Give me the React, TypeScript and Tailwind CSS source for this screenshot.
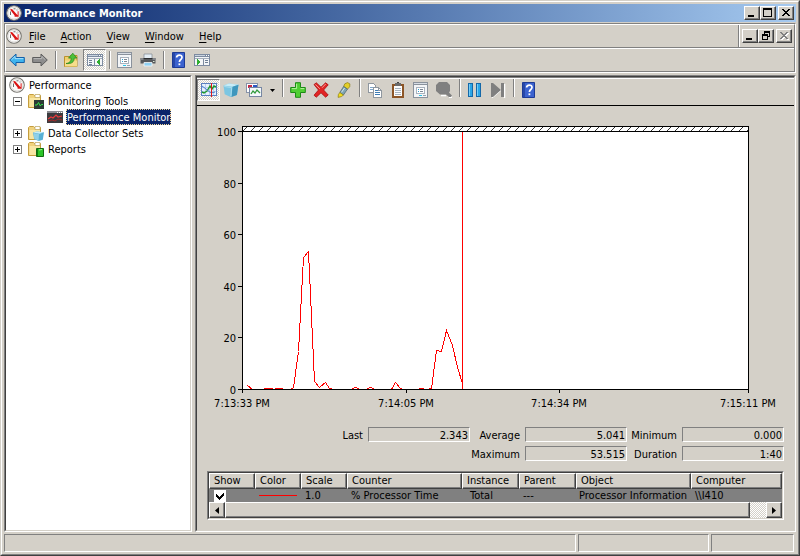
import type { ReactNode } from 'react';
import clsx from 'clsx';

const RAISED =
  'bg-[#d4d0c8] border border-t-white border-l-white border-r-[#404040] border-b-[#404040] shadow-[inset_-1px_-1px_0_#808080]';
const SUNKEN = 'border border-t-[#808080] border-l-[#808080] border-r-white border-b-white';
const CHECKER = 'bg-[repeating-conic-gradient(#ffffff_0_25%,#d4d0c8_0_50%)] bg-[length:2px_2px]';

/* ── Icons ─────────────────────────────────────────── */

function Svg({ children, crisp }: { children: ReactNode; crisp?: boolean }) {
  return (
    <svg
      width="16"
      height="16"
      viewBox="0 0 16 16"
      fill="none"
      aria-hidden="true"
      className="shrink-0"
      shapeRendering={crisp ? 'crispEdges' : 'auto'}
    >
      {children}
    </svg>
  );
}

const GaugeIcon = () => (
  <Svg>
    <circle cx="8" cy="8" r="7.3" fill="#fbfbfb" stroke="#77756f" strokeWidth="1.1" />
    <circle cx="8" cy="8" r="6" stroke="#dedcd8" />
    <path d="M4.500 10V6.500M7.500 3.800h2M10.500 5h1" stroke="#6b6b6b" strokeWidth="1" />
    <path d="M4 4.600L6 4l5.600 6.200V6.200h1v5.600H8.600V10.600z" fill="#dc1414" />
  </Svg>
);

const BackIcon = () => (
  <Svg>
    <path d="M.7 8L7 2v3.5h8.3v5H7V14z" fill="#3fb4ee" stroke="#1560a8" />
    <path d="M2.5 7.8L6 4.4v2.2h8.3" stroke="#a5e0fb" />
  </Svg>
);

const ForwardIcon = () => (
  <Svg>
    <path d="M15.3 8L9 2v3.5H.7v5H9V14z" fill="#8d8d8d" stroke="#5c5c5c" />
    <path d="M1.6 6.6h8.2V4.4l3.4 3.3" stroke="#b9b9b9" />
  </Svg>
);

const UpFolderIcon = () => (
  <Svg>
    <path d="M1.5 4.5h5l1-1h6.5v11H1.5z" fill="#f0cf6e" stroke="#b8912d" />
    <path d="M2 8.5h12v6H2z" fill="#f6dd8b" />
    <path d="M3 11.500c3.800-.4 5.200-2.600 5.200-5.400H5.500L9.800 1.200l4 4.900h-2.600c0 4.200-2.900 6-8.200 5.400z" fill="#4cc13a" stroke="#21821a" strokeWidth=".7" />
  </Svg>
);

const PaneIcon = ({ flip }: { flip?: boolean }) => (
  <Svg crisp>
    <path d="M0 2h16v12H0z" fill="#7d8ba0" />
    <path d="M1 5h14v8H1z" fill="#f4f6f8" />
    <path d="M1 3h10v1H1z" fill="#c9d3df" />
    <path d="M12 3h1v1h-1zM14 3h1v1h-1z" fill="#fff" />
    <path d="M1 6h14v1H1z" fill="#a3adbb" />
    {flip ? (
      <>
        <path d="M9 7h1v6H9z" fill="#7d8ba0" />
        <path d="M11 8h3v1h-3zM11 10h3v1h-3z" fill="#6e7f95" />
        <path d="M3 7h1v6H3zM4 8h1v4H4zM5 9h1v2H5z" fill="#2fae2f" />
      </>
    ) : (
      <>
        <path d="M7 7h1v6H7z" fill="#7d8ba0" />
        <path d="M2 8h3v1H2zM2 10h3v1H2zM2 12h3v1H2z" fill="#6e7f95" />
        <path d="M12 7h1v6h-1zM11 8h1v4h-1zM10 9h1v2h-1z" fill="#2fae2f" />
      </>
    )}
  </Svg>
);

const PropertiesIcon = () => (
  <Svg crisp>
    <path d="M0 0h15v16H0z" fill="#8a929c" />
    <path d="M1 3h13v12H1z" fill="#f3f5f7" />
    <path d="M1 1h13v1H1z" fill="#d7dde4" />
    <path d="M3 5h9v7H3z" fill="#a9b2bd" />
    <path d="M4 6h7v5H4z" fill="#fff" />
    <path d="M5 7h1v1H5zM5 9h1v1H5z" fill="#2a9fd0" />
    <path d="M7 7h3v1H7zM7 9h3v1H7z" fill="#7c8794" />
    <path d="M6 13h3v1H6z" fill="#28c3e8" />
    <path d="M10 13h3v1h-3z" fill="#98a3af" />
  </Svg>
);

const PrintIcon = () => (
  <Svg>
    <path d="M4 2h8v5H4z" fill="#e3edf5" stroke="#8b939b" strokeWidth=".8" />
    <path d="M.5 6h15v5.500H.5z" fill="#55585c" />
    <path d="M.5 6h15v2H.5z" fill="#83878c" />
    <path d="M3.500 6h9v1.500h-9z" fill="#2c2e31" />
    <path d="M4 10.500h8V14H4z" fill="#8fd0f2" stroke="#f2f6f9" strokeWidth=".8" />
    <path d="M13 9h1.500v1H13z" fill="#d9e7d0" />
  </Svg>
);

const HelpIcon = () => (
  <Svg>
    <path d="M1.500.5h12v15h-12z" fill="#3b62cf" stroke="#1d3a96" />
    <path d="M2 1h2v14H2z" fill="#2747a8" />
    <path d="M5.600 5.600C5.600 2.300 11.200 2.200 11 5.500c-.1 2-2.600 2.100-2.600 4.500" stroke="#fff" strokeWidth="1.700" />
    <path d="M7.500 11.400h1.800v1.800H7.500z" fill="#fff" />
  </Svg>
);

const LineGraphIcon = () => (
  <Svg crisp>
    <path d="M.5 1.500h15v12H.5z" fill="#e8f1fc" stroke="#5a7fc0" />
    <path d="M1 5.500h14M1 9.500h14M4.500 2v11M8.500 2v11M12.500 2v11" stroke="#b6cfee" />
    <path d="M1 10l2 1 3-2 3-5 2 3 2-3 2 1" stroke="#1f9a2a" strokeWidth="1.400" shapeRendering="auto" />
    <path d="M1 4l4 3 5 4 4-1" stroke="#4b7ed0" shapeRendering="auto" />
    <path d="M10 1h1v14h-1z" fill="#e01b1b" />
  </Svg>
);

const CubeIcon = () => (
  <Svg>
    <path d="M.5 3.500L6 1.500l9.500 1.200-1.600 10.400-6.400 1.900-5.800-2.700z" fill="#7cc6e2" />
    <path d="M.5 3.500L6 1.500l9.500 1.200-6 2.100z" fill="#c8ecf7" />
    <path d="M9.500 4.800l6-2.100-1.600 10.400-5.400 1.800z" fill="#3f97bd" />
    <path d="M1.300 4.500l7.400 1.100-.8 8.500" stroke="#a9deef" />
  </Svg>
);

const PicturesIcon = () => (
  <Svg crisp>
    <path d="M.5 1.500h11v9H.5z" fill="#fff" stroke="#8692a8" />
    <path d="M2 3h4v3H2z" fill="#c22743" />
    <path d="M7 3h4v3H7z" fill="#2c57c4" />
    <path d="M3.500 5.500h12v9h-12z" fill="#f4f7fb" stroke="#7787a3" />
    <path d="M5 12l2-3 2 2 2-3 3 3" stroke="#2f9a3a" strokeWidth="1.300" shapeRendering="auto" />
  </Svg>
);

const AddIcon = () => (
  <Svg>
    <path d="M5.500.7h5v4.800h4.800v5h-4.800v4.800h-5v-4.800H.7v-5h4.800z" fill="#4fce32" stroke="#1c8a14" />
    <path d="M6.600 6.600V1.800M1.800 6.600h4.800M10.500 6.600h3.800" stroke="#b4f29c" />
  </Svg>
);

const DeleteIcon = () => (
  <Svg>
    <path d="M1 2.600L3.300.8 8 5.200l4.600-4.400 2.600 2L10.600 8l4.600 5-2.600 2.200L8 10.800l-4.700 4.400L1 13.200 5.500 8z" fill="#e22424" stroke="#a80f0f" strokeWidth=".8" />
    <path d="M2.400 2.500l4.400 4.300M12.700 2L9 5.800" stroke="#f79a94" />
  </Svg>
);

const HighlightIcon = () => (
  <Svg>
    <path d="M8.800 1.800L11.500.6l2.400 1.300-.2 2.900-2.200 2.300-3.900-2.600z" fill="#e3cf28" stroke="#8a7b12" strokeWidth=".7" />
    <path d="M7.600 4.500l3.900 2.600-4.100 5.900-3.600-2.500z" fill="#7fa5b4" stroke="#47616c" strokeWidth=".7" />
    <path d="M3.800 10.500l3.600 2.500-2 1.600-3.300.8.300-2.900z" fill="#f1dc1e" stroke="#8a7b12" strokeWidth=".7" />
    <path d="M8.600 6L5.500 10.300" stroke="#d3e5ea" />
  </Svg>
);

const CopyIcon = () => (
  <Svg crisp>
    <path d="M1.500 1.500h5l2 2v7h-7z" fill="#fff" stroke="#8f979f" />
    <path d="M3 5h4M3 7h4" stroke="#7fa8cc" />
    <path d="M6.500 5.500h5l3 3v7h-8z" fill="#fff" stroke="#8f979f" />
    <path d="M8 8.500h3M8 10.500h5M8 12.500h5" stroke="#3f7db5" />
    <path d="M11 5h1v3h3v1h-4z" fill="#8f979f" />
  </Svg>
);

const PasteIcon = () => (
  <Svg crisp>
    <path d="M2 2h12v14H2z" fill="#8c5526" />
    <path d="M4 4h8v10H4z" fill="#fbfcfd" />
    <path d="M5 1h6v3H5z" fill="#6b6b6b" />
    <path d="M7 0h2v1H7z" fill="#444" />
    <path d="M5 6.500h6M5 8.500h6M5 10.500h6M5 12.500h6" stroke="#a7b3be" />
  </Svg>
);

const ZoomIcon = () => (
  <Svg>
    <path d="M12.500 11.500l3.500 4h-3M5 13.500h5" stroke="#fff" strokeWidth="1.300" />
    <path d="M3 0h8l3 3v6l-1 1.500 3 3-1 1.500h-2l-3-2.500H4L0 9V3z" fill="#808080" />
  </Svg>
);

const PauseIcon = () => (
  <Svg crisp>
    <path d="M1.500 1.500h4v13h-4zM9.500 1.500h4v13h-4z" fill="#2ba6e6" stroke="#1468a8" />
    <path d="M2 2h1v12H2zM10 2h1v12h-1z" fill="#75cdf6" />
  </Svg>
);

const StepIcon = () => (
  <Svg>
    <path d="M2 15.500l9-7.500M14.500 2v14" stroke="#fff" strokeWidth="1.500" />
    <path d="M1 1h2l8 7-8 7H1zM11 1h3v14h-3z" fill="#808080" />
  </Svg>
);

const Folder = () => (
  <>
    <path d="M.5 2.500l1-1h4l1 1h6v12H.5z" fill="#f0d27c" stroke="#c59d3d" />
    <path d="M7 1.500h5v3H7z" fill="#fff" stroke="#b9a25a" strokeWidth=".7" />
    <path d="M1.500 5h10.500v9H1.500z" fill="#f8e6a4" />
  </>
);

const ToolsFolderIcon = () => (
  <Svg>
    <Folder />
    <path d="M6 7h10v9H6z" fill="#2b3a34" />
    <path d="M7 12h2l1.500-2.500 1.800 3.500 1-1.500H15" stroke="#35e04a" />
  </Svg>
);

const DataFolderIcon = () => (
  <Svg>
    <Folder />
    <path d="M5 7.500l4-1 7 .8-1.200 7.500-4 1.200-4.600-1.800z" fill="#58b1d6" />
    <path d="M5 7.500l4-1 7 .8-4.500 1.500z" fill="#c5ebf7" />
    <path d="M5.500 8l5.500 1-.4 6.500-4.200-1.600z" fill="#8fd0e8" />
  </Svg>
);

const ReportsFolderIcon = () => (
  <Svg>
    <Folder />
    <path d="M8.500 7.500h7v8h-7z" fill="#2cc428" stroke="#0f6a10" />
    <path d="M9 8h1v7H9z" fill="#0f7d12" />
    <path d="M11 9l3-.5" stroke="#9bf08e" />
  </Svg>
);

const MonitorIcon = () => (
  <Svg crisp>
    <path d="M0 2h16v12H0z" fill="#3b3b3e" />
    <path d="M0 2h16v2H0z" fill="#8b8b90" />
    <path d="M10 3h1v1h-1zM12 3h1v1h-1zM14 3h1v1h-1z" fill="#fff" />
    <path d="M1 10l3-2 2 1 3-3 2 2 4-1" stroke="#ea3b3b" strokeWidth="1.200" shapeRendering="auto" />
    <path d="M1 12l4-1 3 1 3-2 4 1" stroke="#a32b2b" shapeRendering="auto" />
  </Svg>
);

/* ── Window caption buttons ────────────────────────── */

type Caption = 'minimize' | 'maximize' | 'restore' | 'close';

const CAPTION_PATHS: Record<Caption, string> = {
  minimize: 'M3 8h6v2H3z',
  maximize: 'M2 1h9v9H2zM3 3v6h7V3z',
  restore: 'M5 1h6v6H9V6h1V3H6v1H5zM3 4h6v6H3zM4 6v3h4V6z',
  close: 'M3 2h2v1h1v1h2V3h1V2h2v1h-1v1H9v1H8v1h1v1h1v1h1v1H9V8H8V7H6v1H5v1H3V8h1V7h1V6h1V5H5V4H4V3H3z',
};

function CaptionButton({ kind, label, disabled }: { kind: Caption; label: string; disabled?: boolean }) {
  return (
    <button
      aria-label={label}
      disabled={disabled}
      className={clsx('h-[14px] w-4', RAISED, kind === 'close' && 'ml-0.5')}
    >
      <svg
        width="14"
        height="12"
        viewBox="0 0 14 12"
        fillRule="evenodd"
        shapeRendering="crispEdges"
        className="block"
        aria-hidden="true"
      >
        {disabled && <path d={CAPTION_PATHS[kind]} fill="#fff" transform="translate(1 1)" />}
        <path d={CAPTION_PATHS[kind]} fill={disabled ? '#808080' : '#000'} />
      </svg>
    </button>
  );
}

/* ── Toolbars ──────────────────────────────────────── */

function ToolButton({ label, pressed, children }: { label: string; pressed?: boolean; children: ReactNode }) {
  return (
    <button
      aria-label={label}
      aria-pressed={pressed}
      className={clsx('flex h-[22px] w-[23px] shrink-0 items-center pl-[3px]', pressed && [SUNKEN, CHECKER])}
    >
      {children}
    </button>
  );
}

const Separator = () => (
  <div className="flex w-2 shrink-0 justify-center">
    <div className="h-[18px] w-0.5 border-l border-r border-l-[#808080] border-r-white" />
  </div>
);

const MENUS = ['File', 'Action', 'View', 'Window', 'Help'];

/* ── Console tree ──────────────────────────────────── */

function Expander({ open }: { open?: boolean }) {
  return (
    <button aria-label={open ? 'Collapse' : 'Expand'} className="mr-1.5 size-[9px]">
      <svg width="9" height="9" viewBox="0 0 9 9" shapeRendering="crispEdges" className="block" aria-hidden="true">
        <path d="M.5.5h8v8h-8z" fill="#fff" stroke="#808080" />
        <path d={open ? 'M2 4h5v1H2z' : 'M2 4h5v1H2zM4 2h1v5H4z'} fill="#000" />
      </svg>
    </button>
  );
}

function ConsoleTree() {
  return (
    <nav className={clsx('bg-white', SUNKEN)} aria-label="Console tree">
      <ul className="h-full border border-t-[#404040] border-l-[#404040] border-r-[#d4d0c8] border-b-[#d4d0c8]">
        <li className="flex h-4 items-center gap-1 pl-[3px]">
          <GaugeIcon />
          <span>Performance</span>
        </li>
        <li className="flex h-4 items-center pl-[7px]">
          <Expander open />
          <ToolsFolderIcon />
          <span className="ml-1">Monitoring Tools</span>
        </li>
        <li className="flex h-4 items-center gap-[3px] pl-[41px]">
          <MonitorIcon />
          <span className="h-4 border border-dotted border-[#f5db95] bg-[#0a246a] text-white">
            Performance Monitor
          </span>
        </li>
        <li className="flex h-4 items-center pl-[7px]">
          <Expander />
          <DataFolderIcon />
          <span className="ml-1">Data Collector Sets</span>
        </li>
        <li className="flex h-4 items-center pl-[7px]">
          <Expander />
          <ReportsFolderIcon />
          <span className="ml-1">Reports</span>
        </li>
      </ul>
    </nav>
  );
}

/* ── Graph ─────────────────────────────────────────── */

const PLOT = { left: 35, right: 541, top: 13, bottom: 271 };

const Y_TICKS = [100, 80, 60, 40, 20, 0];

const X_TICKS = [
  { at: 0, label: '7:13:33 PM' },
  { at: 164, label: '7:14:05 PM' },
  { at: 317, label: '7:14:34 PM' },
  { at: 506, label: '7:15:11 PM' },
];

// [offset along the time axis, % processor time]
const SAMPLES: [number, number][] = [
  [5, 1.6], [10, 0.1], [20, 0], [24, 0.5], [29, 0.5], [31, 0], [34, 0.5], [39, 0.5], [41, 0], [48, 0],
  [51, 0.8], [56, 14.7], [61, 51], [66, 53.5], [72, 3], [77, 0.8], [83, 2.8], [87, 0.5], [91, 0],
  [108, 0], [113, 0.8], [118, 0], [123, 0], [128, 0.8], [133, 0], [149, 0], [153, 2.8], [158, 0.4],
  [160, 0], [175, 0], [179, 0.5], [184, 0], [189, 0.5], [194, 15.2], [199, 14.8], [204, 22.8],
  [210, 17], [215, 8.5], [220, 2.3],
];

const yOf = (value: number) => PLOT.bottom - Math.round((value * (PLOT.bottom - PLOT.top)) / 100);

function Graph() {
  const { left, right, top, bottom } = PLOT;
  const line = SAMPLES.map(([x, v]) => `${left + x + 0.5},${yOf(v) + 0.5}`).join(' ');

  return (
    <svg viewBox="0 0 577 296" className="block h-auto w-full" role="img" aria-label="% Processor Time">
      <defs>
        <pattern id="hatch" width="8" height="4" patternUnits="userSpaceOnUse" x="35" y="9">
          <path d="M1 3h1v1H1zM2 2h1v1H2zM3 1h1v1H3zM4 0h1v1H4z" fill="#333" shapeRendering="crispEdges" />
        </pattern>
      </defs>
      <rect x={left} y="8" width={right - left} height={bottom - 8} fill="#fff" />
      <rect x={left} y="9" width={right - left} height="4" fill="url(#hatch)" />

      <polyline points={line} fill="none" stroke="#f00" shapeRendering="crispEdges" />
      <path d={`M${left + 220.5} ${top}V${bottom}`} stroke="#f00" shapeRendering="crispEdges" />

      <g stroke="#000" shapeRendering="crispEdges">
        <path
          fill="none"
          d={`M${left + 0.5} ${bottom + 0.5}V8.500H${right + 0.5}V${bottom + 0.5}zM${left} ${top + 0.5}H${right}`}
        />
        {Y_TICKS.map(v => (
          <path key={v} d={`M${left - 4} ${yOf(v) + 0.5}h4`} />
        ))}
        {X_TICKS.map(t => (
          <path key={t.at} d={`M${left + t.at + 0.5} ${bottom}v4`} />
        ))}
      </g>

      <g fontSize="11" fill="#000">
        {Y_TICKS.map(v => (
          <text key={v} x={left - 6} y={yOf(v) + 5} textAnchor="end">
            {v}
          </text>
        ))}
        {X_TICKS.map(t => (
          <text key={t.at} x={left + t.at} y={bottom + 18} textAnchor="middle">
            {t.label}
          </text>
        ))}
      </g>
    </svg>
  );
}

/* ── Value bar ─────────────────────────────────────── */

function Stat({ label, value }: { label: string; value: string }) {
  const id = `stat-${label.toLowerCase()}`;
  return (
    <div className="flex items-center gap-[5px]">
      <label htmlFor={id} className="w-[50px] pt-px text-right">
        {label}
      </label>
      <input
        id={id}
        readOnly
        value={value}
        className={clsx('h-[15px] w-[102px] px-px pt-px text-right', SUNKEN)}
      />
    </div>
  );
}

/* ── Counter legend ────────────────────────────────── */

const COLUMNS = [
  { name: 'Show', width: 'w-[46px]' },
  { name: 'Color', width: 'w-[46px]' },
  { name: 'Scale', width: 'w-[46px]' },
  { name: 'Counter', width: 'w-[115px]' },
  { name: 'Instance', width: 'w-[57px]' },
  { name: 'Parent', width: 'w-[57px]' },
  { name: 'Object', width: 'w-[115px]' },
  { name: 'Computer', width: '' },
];

function Legend() {
  return (
    <div className={clsx('mt-2.5', SUNKEN)}>
      <div className="border border-t-[#404040] border-l-[#404040] border-r-[#d4d0c8] border-b-[#d4d0c8]">
        <table className="w-full table-fixed border-separate border-spacing-0">
          <thead>
            <tr className="h-4">
              {COLUMNS.map(c => (
                <th
                  key={c.name}
                  className={clsx('py-0 pr-0 pl-1 text-left leading-[14px] font-normal', RAISED, c.width)}
                >
                  {c.name}
                </th>
              ))}
            </tr>
          </thead>
          <tbody>
            <tr className="h-[13px] bg-[#808080] leading-[13px] whitespace-nowrap">
              <td className="p-0 pl-[5px]">
                <label className="relative block size-3">
                  <input
                    type="checkbox"
                    defaultChecked
                    aria-label="Show % Processor Time"
                    className="peer block size-3 appearance-none bg-white"
                  />
                  <svg
                    viewBox="0 0 12 12"
                    className="absolute inset-0 hidden peer-checked:block"
                    shapeRendering="crispEdges"
                    aria-hidden="true"
                  >
                    <path d="M2 4h1v1h1v1h1v1h1V6h1V5h1V4h1V3h1v3H9v1H8v1H7v1H6v1H5V9H4V8H3V7H2z" />
                  </svg>
                </label>
              </td>
              <td className="p-0 pl-1">
                <svg width="38" height="3" viewBox="0 0 38 3" className="block" aria-hidden="true">
                  <path d="M0 1h38v1H0z" fill="#f00" shapeRendering="crispEdges" />
                </svg>
              </td>
              <td className="p-0 pl-1">1.0</td>
              <td className="p-0 pl-1">% Processor Time</td>
              <td className="p-0 pl-2">Total</td>
              <td className="p-0 pl-1">---</td>
              <td className="p-0 pl-[3px]">Processor Information</td>
              <td className="p-0 pl-1">\\I410</td>
            </tr>
          </tbody>
        </table>
        <div className={clsx('flex h-4', CHECKER)}>
          <button aria-label="Scroll left" className={clsx('flex w-4 items-center justify-center', RAISED)}>
            <svg width="4" height="7" viewBox="0 0 4 7" aria-hidden="true">
              <path d="M4 0v7L0 3.500z" />
            </svg>
          </button>
          <div className={clsx('mr-4 flex-1', RAISED)} />
          <button aria-label="Scroll right" className={clsx('flex w-4 items-center justify-center', RAISED)}>
            <svg width="4" height="7" viewBox="0 0 4 7" aria-hidden="true">
              <path d="M0 0v7l4-3.500z" />
            </svg>
          </button>
        </div>
      </div>
    </div>
  );
}

export default function App() {
  return (
    <div className="flex min-h-screen flex-col border border-t-[#d4d0c8] border-r-[#404040] border-b-[#404040] border-l-[#d4d0c8] bg-[#d4d0c8] font-['DejaVu_Sans_Condensed','DejaVu_Sans',sans-serif] text-[11px] leading-[15px] text-black">
      <div className="flex flex-1 flex-col border border-t-white border-r-[#808080] border-b-[#808080] border-l-white p-0.5">
        {/* Title bar */}
        <header className="flex h-[18px] items-center bg-linear-to-r from-[#0a246a] to-[#a6caf0] px-0.5">
          <GaugeIcon />
          <h1 className="ml-0.5 flex-1 font-bold text-white">Performance Monitor</h1>
          <CaptionButton kind="minimize" label="Minimize" />
          <CaptionButton kind="maximize" label="Maximize" />
          <CaptionButton kind="close" label="Close" />
        </header>

        {/* Menu bar and console toolbar */}
        <div className={clsx('mt-px', SUNKEN)}>
          <div className="border border-t-white border-r-[#808080] border-b-[#808080] border-l-white">
            <div className="flex h-[22px] items-center">
              <GaugeIcon />
              <nav className="flex flex-1 gap-px" aria-label="Menu">
                {MENUS.map(m => (
                  <button key={m} className="px-[7px]">
                    <span className="underline underline-offset-2">{m[0]}</span>
                    {m.slice(1)}
                  </button>
                ))}
              </nav>
              <div className="flex h-full items-center border-l border-l-[#808080] pr-0.5 shadow-[inset_1px_0_0_#fff]">
                <div className="ml-[3px] flex">
                  <CaptionButton kind="minimize" label="Minimize console" />
                  <CaptionButton kind="restore" label="Restore console" />
                  <CaptionButton kind="close" label="Close console" disabled />
                </div>
              </div>
            </div>
            <div className="h-0.5 border-t border-b border-t-[#808080] border-b-white" />
            <div className="flex h-[22px] items-center">
              <ToolButton label="Back"><BackIcon /></ToolButton>
              <ToolButton label="Forward"><ForwardIcon /></ToolButton>
              <Separator />
              <ToolButton label="Up one level"><UpFolderIcon /></ToolButton>
              <ToolButton label="Show console tree" pressed><PaneIcon /></ToolButton>
              <Separator />
              <ToolButton label="Properties"><PropertiesIcon /></ToolButton>
              <ToolButton label="Print"><PrintIcon /></ToolButton>
              <Separator />
              <ToolButton label="Help"><HelpIcon /></ToolButton>
              <ToolButton label="Show action pane"><PaneIcon flip /></ToolButton>
            </div>
          </div>
        </div>

        {/* Console */}
        <div className="mt-0.5 grid flex-1 grid-cols-[188px_minmax(0,1fr)] gap-[3px]">
          <ConsoleTree />

          <main className={SUNKEN}>
            <div className="h-full border border-t-[#404040] border-r-[#d4d0c8] border-b-[#d4d0c8] border-l-[#404040]">
              <div className="flex h-[29px] border-t border-b border-t-[#808080] border-b-black pt-px shadow-[inset_0_1px_0_#fff]">
                <ToolButton label="View current activity" pressed><LineGraphIcon /></ToolButton>
                <ToolButton label="View log data"><CubeIcon /></ToolButton>
                <ToolButton label="Change graph type"><PicturesIcon /></ToolButton>
                <button aria-label="Graph types" className="flex h-[22px] w-[13px] items-center justify-center">
                  <svg width="5" height="3" viewBox="0 0 5 3" aria-hidden="true">
                    <path d="M0 0h5L2.500 3z" />
                  </svg>
                </button>
                <Separator />
                <ToolButton label="Add"><AddIcon /></ToolButton>
                <ToolButton label="Delete"><DeleteIcon /></ToolButton>
                <ToolButton label="Highlight"><HighlightIcon /></ToolButton>
                <Separator />
                <ToolButton label="Copy properties"><CopyIcon /></ToolButton>
                <ToolButton label="Paste counter list"><PasteIcon /></ToolButton>
                <ToolButton label="Graph properties"><PropertiesIcon /></ToolButton>
                <ToolButton label="Zoom"><ZoomIcon /></ToolButton>
                <Separator />
                <ToolButton label="Freeze display"><PauseIcon /></ToolButton>
                <ToolButton label="Update data"><StepIcon /></ToolButton>
                <Separator />
                <ToolButton label="Graph help"><HelpIcon /></ToolButton>
              </div>

              <div className="px-[10px] pt-3 pb-2.5">
                <Graph />
                <div className="mt-[13px] flex flex-col gap-1">
                  <div className="flex h-[15px] items-center justify-end">
                    <Stat label="Last" value="2.343" />
                    <Stat label="Average" value="5.041" />
                    <Stat label="Minimum" value="0.000" />
                  </div>
                  <div className="flex h-[15px] items-center justify-end">
                    <Stat label="Maximum" value="53.515" />
                    <Stat label="Duration" value="1:40" />
                  </div>
                </div>
                <Legend />
              </div>
            </div>
          </main>
        </div>

        {/* Status bar */}
        <footer className="mt-0.5 flex h-[18px] gap-0.5 pr-0.5">
          <div className={clsx('flex-1', SUNKEN)} />
          <div className={clsx('w-[131px]', SUNKEN)} />
          <div className={clsx('w-[83px]', SUNKEN)} />
        </footer>
      </div>
    </div>
  );
}
